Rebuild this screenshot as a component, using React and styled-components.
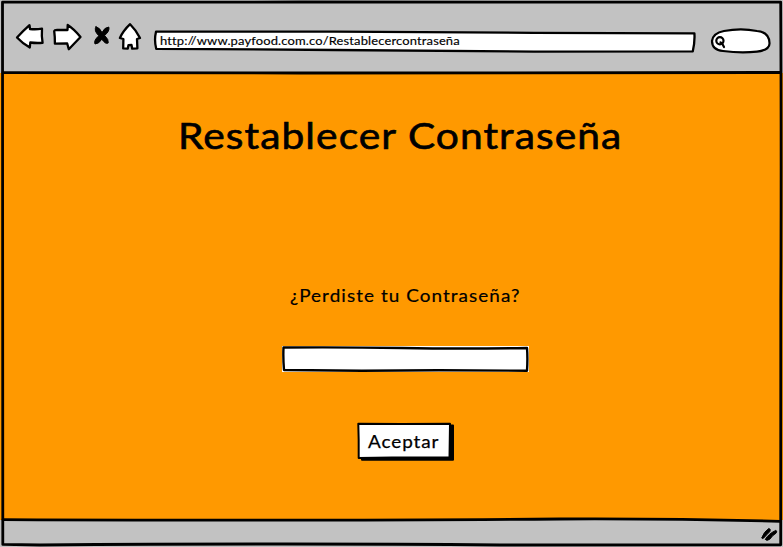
import React from "react";
import styled, { createGlobalStyle } from "styled-components";

const GlobalStyle = createGlobalStyle`
  * { box-sizing: border-box; }
  body { margin: 0; background: #c0c0c0; overflow: hidden; }
  button, input { font: inherit; color: inherit; border: 0; padding: 0; outline: 0; background: none; }
`;

const Window = styled.div`
  position: relative;
  width: 783px;
  height: 547px;
  display: flex;
  flex-direction: column;
  background: #c2c2c2;
  color: #000;
  font-family: Lato, "Liberation Sans", sans-serif;
`;

const Toolbar = styled.header`
  height: 73px;
  display: flex;
  align-items: flex-start;
  padding: 22px 0 0 14px;
`;

const NavButton = styled.button`
  width: ${(p) => p.$width}px;
  height: 30px;
  margin-right: ${(p) => p.$gap || 0}px;
`;

const Icon = styled.svg`
  display: block;
  width: 100%;
  height: 100%;
  overflow: visible;
  fill: #fff;
  stroke: #000;
  stroke-width: 2.3;
  stroke-linejoin: round;
  stroke-linecap: round;
`;

const Sketch = styled.svg`
  position: absolute;
  inset: 0;
  width: 100%;
  height: 100%;
  overflow: visible;
  pointer-events: none;
  fill: ${(p) => p.$fill || "none"};
  stroke: #000;
  stroke-width: ${(p) => p.$weight || 2.5};
  stroke-linejoin: round;
  stroke-linecap: round;
`;

const AddressBar = styled.div`
  position: relative;
  width: 542px;
  height: 23px;
  margin: 8px 15px 0 10px;
  padding-left: 6px;
`;

const Address = styled.span`
  position: relative;
  display: block;
  font-size: 12px;
  line-height: 21px;
  letter-spacing: ${(p) => p.$track}px;
  white-space: nowrap;
  transform: scaleX(1.08);
  transform-origin: left;
  -webkit-text-stroke: 0.15px #000;
`;

const SearchBox = styled.div`
  position: relative;
  width: 60px;
  height: 25px;
  margin-top: 6px;
`;

const Page = styled.main`
  flex: 1;
  display: flex;
  flex-direction: column;
  align-items: flex-start;
  background: #ff9900;
`;

const Title = styled.h1`
  margin: 37px 0 0 177.5px;
  font-size: 37.5px;
  font-weight: 400;
  line-height: 50px;
  letter-spacing: ${(p) => p.$track}px;
  white-space: nowrap;
  transform: scaleX(1.085);
  transform-origin: left;
  -webkit-text-stroke: 0.65px #000;
`;

const Question = styled.label`
  margin: 124px 0 0 290px;
  font-size: 17.5px;
  line-height: 24px;
  letter-spacing: ${(p) => p.$track}px;
  white-space: nowrap;
  transform: scaleX(1.08);
  transform-origin: left;
  -webkit-text-stroke: 0.2px #000;
`;

const Field = styled.div`
  position: relative;
  width: 247px;
  height: 26px;
  margin: 38px 0 0 282px;
  background: #fff;
`;

const Accept = styled.button`
  position: relative;
  width: 97px;
  height: 39px;
  margin: 50px 0 0 357px;
  display: flex;
  padding: 8px 0 0 11px;
`;

const AcceptLabel = styled.span`
  position: relative;
  font-size: 17.5px;
  line-height: 24px;
  letter-spacing: ${(p) => p.$track}px;
  transform: scaleX(1.08);
  transform-origin: left;
  -webkit-text-stroke: 0.25px #000;
`;

const StatusBar = styled.footer`
  height: 27px;
  display: flex;
  justify-content: flex-end;
  padding: 7px 5px 0 0;
`;

const Grip = styled.svg`
  width: 17px;
  height: 14px;
  overflow: visible;
  fill: #000;
  stroke: #000;
  stroke-width: 1;
  stroke-linejoin: round;
`;

export default function App() {
  return (
    <>
      <GlobalStyle />
      <Window>
        <Toolbar>
          <NavButton $width={32} $gap={6} aria-label="Atrás">
            <Icon viewBox="0 0 32 30">
              <path d="M3 15.5 Q9 9 15.5 3.2 L16 7 Q22 7.6 28 6.7 Q27.4 14 28.6 20.8 Q22 21.3 16.3 20.5 L15.8 25.5 Q8 21 3 15.5Z" />
            </Icon>
          </NavButton>
          <NavButton $width={32} $gap={8} aria-label="Adelante">
            <Icon viewBox="0 0 32 30">
              <path d="M2.2 9 Q2.5 8 5 8 L15.5 8 L15.7 3 Q22 7 28.5 15 L16.8 27.2 L15.2 21.5 L2.9 21.7 Q3 15 2.2 9Z" />
            </Icon>
          </NavButton>
          <NavButton $width={20} $gap={6} aria-label="Detener">
            <Icon viewBox="0 0 20 30">
              <path
                d="M4 4.8 Q7.8 5.6 10 10.6 Q12.5 5.3 16.8 5 Q18 9 12.6 13.5 Q17 17.5 16.2 21 Q13.6 22.6 9.8 17.2 Q7 21.9 3 22 Q1.4 18.5 6.8 13.8 Q1.4 8.5 4 4.8Z"
                fill="#000"
                strokeWidth="1"
              />
            </Icon>
          </NavButton>
          <NavButton $width={26} aria-label="Inicio">
            <Icon viewBox="0 0 26 30">
              <path d="M12.1 2.2 Q18 8 22 16 L19 17 L19.4 26.4 L14.2 26.7 L13.5 23 L10.5 23.1 L9.8 26.6 L5.2 26.4 L5.4 17 L1.9 16 Q5 9 12.1 2.2Z" />
            </Icon>
          </NavButton>
          <AddressBar>
            <Sketch viewBox="0 0 542 23" $fill="#fff" $weight={2.3}>
              <path d="M2 1.7 L180 1.6 L380 2.8 L540.4 3.3 Q541 12 538.8 21.3 L380 21.6 L180 20 L2.2 18.8 Q0 10 2 1.7Z" />
            </Sketch>
            <Address $track={0.13}>http://www.payfood.com.co/Restablecercontraseña</Address>
          </AddressBar>
          <SearchBox>
            <Sketch viewBox="0 0 60 25" $fill="#fff" $weight={2.2}>
              <path d="M13 3 Q30 -.3 46 3 Q58 4 58.5 15 Q59 22 46 23.6 Q30 25.4 12 23 Q1 22 1 13 Q2 5 13 3Z" />
              <circle cx="8.9" cy="12.7" r="3.6" />
              <path d="M9.5 14.3 L11.4 16 L13 19" />
            </Sketch>
          </SearchBox>
        </Toolbar>
        <Page>
          <Title $track={1}>Restablecer Contraseña</Title>
          <Question $track={0.98}>¿Perdiste tu Contraseña?</Question>
          <Field>
            <Sketch viewBox="0 0 247 26" $weight={2.4}>
              <path d="M1.5 1.5 Q60 1 120 2 T245 2 Q245.8 12 245 24.8 Q160 23.8 80 24.7 L2 24 Q1 12 1.5 1.5Z" />
            </Sketch>
          </Field>
          <Accept>
            <Sketch viewBox="0 0 97 39" $weight={2}>
              <path d="M4.5 3.5 L96 3.5 L96 37.8 L5 37.8Z" fill="#000" />
              <path d="M1.3 1.7 L45 2 L93 1.8 L92.5 35.5 L35 35.5 L1.7 36 Q1.9 18 1.3 1.7Z" fill="#fff" />
            </Sketch>
            <AcceptLabel $track={0.85}>Aceptar</AcceptLabel>
          </Accept>
        </Page>
        <StatusBar>
          <Grip viewBox="0 0 17 14">
            <path d="M.7 11 Q2.8 4.8 7.8 1.5 Q10.2 1.8 8.8 4.6 Q6 7.5 2.5 11.2 Q1.3 12 .7 11Z" />
            <path d="M4.3 12.4 Q7.5 6.8 14.8 3.4 Q16.6 3.8 15 6.2 L11.8 8.6 L8.8 12.2 Q5.7 14.4 4.3 12.4Z" />
          </Grip>
        </StatusBar>
        <Sketch viewBox="0 0 783 547" $weight={2.8}>
          <path d="M2.5 2.2 L300 2 L780.7 2.2 Q781.5 160 780.8 300 L780.7 544.8 L500 545 Q300 543 40 545 L2.8 544.4 Q3.3 250 2.5 2.2Z" />
          <path d="M3 72.7 L300 73 L780 72.5" />
          <path d="M3 519.6 Q350 521 560 519 Q680 518.5 780 521.4" />
        </Sketch>
      </Window>
    </>
  );
}
